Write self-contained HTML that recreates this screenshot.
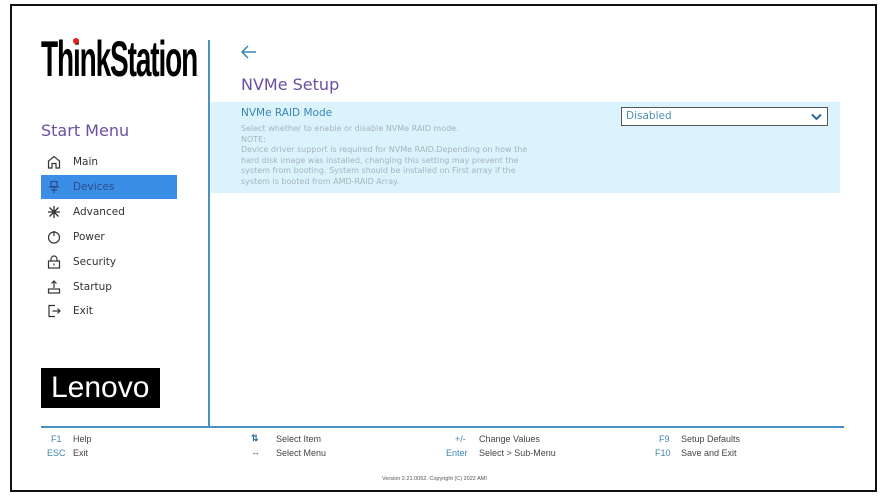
<!DOCTYPE html>
<html><head><meta charset="utf-8"><style>
*{margin:0;padding:0;box-sizing:border-box}
body{width:887px;height:496px;background:#fff;position:relative;overflow:hidden;font-family:"DejaVu Sans","Liberation Sans",sans-serif}
.abs{position:absolute}
.frame{left:10px;top:4px;width:867px;height:488px;border:2px solid #111}
.logo{left:41px;top:32px;font-family:"Liberation Sans",sans-serif;font-weight:bold;font-size:50px;letter-spacing:-2px;transform:scaleX(0.56);transform-origin:left top;color:#000;line-height:54px;white-space:nowrap}
.vline{left:208px;top:40px;width:2px;height:388px;background:#4a8fc2}
.hline{left:41px;top:426px;width:803px;height:2px;background:#4a8fc2}
.sm{left:41px;top:121px;font-size:16px;color:#6b4fa0}
.item{left:41px;width:136px;height:24px;font-size:10.5px;color:#333;line-height:24px;padding-left:32px}
.item svg{position:absolute;left:6px;top:5px}
.sel{background:#3a8ee6;color:#2a4d8a}
.lenovo{left:41px;top:368px;width:119px;height:40px;background:#000;color:#fff;font-family:"Liberation Sans",sans-serif;font-size:30px;line-height:40px;padding-left:10px;letter-spacing:0px}
.hl{left:211px;top:102px;width:629px;height:91px;background:#daf3fc}
.t1{left:241px;top:107px;font-size:10.5px;color:#3a86b0}
.desc{left:241px;top:124px;font-size:8px;line-height:10.5px;color:#a8b4ba}
.dd{left:621px;top:107px;width:207px;height:19px;border:1px solid #555;background:#fff;font-size:10.5px;color:#4a8fb5;padding-left:4px;line-height:17px}
.title{left:241px;top:75px;font-size:16px;color:#6b4fa0}
.f{font-size:9px;color:#444;font-family:"Liberation Sans Narrow","Liberation Sans",sans-serif}
.k{color:#3a86b0}
</style></head><body>
<div class="abs frame"></div>
<div class="abs logo">ThinkStation<span style="font-size:6px">.</span></div>
<div class="abs" style="left:73px;top:38px;width:6px;height:6px;border-radius:50%;background:#e2231a"></div>
<div class="abs vline"></div>
<div class="abs hline"></div>
<div class="abs sm">Start Menu</div>

<div class="abs item" style="top:150px"><svg width="14" height="14" viewBox="0 0 14 14" fill="none" stroke="#333" stroke-width="1.2"><path d="M1.5 13V6L7 1.5 12.5 6V13H9V8.5H5V13Z"/></svg>Main</div>
<div class="abs item sel" style="top:175px"><svg width="14" height="14" viewBox="0 0 14 14" fill="none" stroke="#2a4d8a" stroke-width="1.2"><rect x="4" y="1.5" width="6" height="5"/><path d="M2 7h10M7 7v6M4 10h6"/></svg>Devices</div>
<div class="abs item" style="top:200px"><svg width="14" height="14" viewBox="0 0 14 14" fill="none" stroke="#333" stroke-width="1.3"><path d="M7 1v12M1 7h12M2.5 2.5l9 9M11.5 2.5l-9 9"/></svg>Advanced</div>
<div class="abs item" style="top:225px"><svg width="14" height="14" viewBox="0 0 14 14" fill="none" stroke="#333" stroke-width="1.2"><circle cx="7" cy="7.5" r="5.5"/><path d="M7 1v5"/></svg>Power</div>
<div class="abs item" style="top:250px"><svg width="14" height="14" viewBox="0 0 14 14" fill="none" stroke="#333" stroke-width="1.2"><path d="M4 6V4a3 3 0 0 1 6 0v2"/><rect x="1.5" y="6" width="11" height="7"/><path d="M7 8.5v2"/></svg>Security</div>
<div class="abs item" style="top:275px"><svg width="14" height="14" viewBox="0 0 14 14" fill="none" stroke="#333" stroke-width="1.2"><path d="M7 1v7M4.5 3.5 7 1l2.5 2.5"/><rect x="1.5" y="9" width="11" height="4"/></svg>Startup</div>
<div class="abs item" style="top:299px"><svg width="14" height="14" viewBox="0 0 14 14" fill="none" stroke="#333" stroke-width="1.2"><path d="M8 1.5H2v11h6M5.5 7H13M10.5 4.5 13 7l-2.5 2.5"/></svg>Exit</div>

<div class="abs lenovo">Lenovo<span style="font-size:5px">.</span></div>

<svg class="abs" style="left:240px;top:44px" width="18" height="16" viewBox="0 0 18 16" fill="none" stroke="#3a86b0" stroke-width="1.5"><path d="M16 8H2M8 2 2 8l6 6"/></svg>
<div class="abs title">NVMe Setup</div>
<div class="abs hl"></div>
<div class="abs t1">NVMe RAID Mode</div>
<div class="abs desc">Select whether to enable or disable NVMe RAID mode.<br>NOTE:<br>Device driver support is required for NVMe RAID.Depending on how the<br>hard disk image was installed, changing this setting may prevent the<br>system from booting. System should be installed on First array if the<br>system is booted from AMD-RAID Array.</div>
<div class="abs dd">Disabled<svg style="position:absolute;right:5px;top:5px" width="11" height="8" viewBox="0 0 11 8" fill="none" stroke="#2a6a99" stroke-width="2"><path d="M1 1.5 5.5 6 10 1.5"/></svg></div>

<div class="abs f" style="left:51px;top:434px"><span class="k">F1</span></div>
<div class="abs f" style="left:73px;top:434px">Help</div>
<div class="abs f" style="left:47px;top:448px"><span class="k">ESC</span></div>
<div class="abs f" style="left:73px;top:448px">Exit</div>
<div class="abs f" style="left:251px;top:433px"><span class="k" style="color:#2a6a99;font-weight:bold">⇅</span></div>
<div class="abs f" style="left:276px;top:434px">Select Item</div>
<div class="abs f" style="left:251px;top:447px"><span class="k" style="color:#2a6a99;font-weight:bold">↔</span></div>
<div class="abs f" style="left:276px;top:448px">Select Menu</div>
<div class="abs f" style="left:455px;top:434px"><span class="k">+/-</span></div>
<div class="abs f" style="left:479px;top:434px">Change Values</div>
<div class="abs f" style="left:446px;top:448px"><span class="k">Enter</span></div>
<div class="abs f" style="left:479px;top:448px">Select &gt; Sub-Menu</div>
<div class="abs f" style="left:659px;top:434px"><span class="k">F9</span></div>
<div class="abs f" style="left:681px;top:434px">Setup Defaults</div>
<div class="abs f" style="left:655px;top:448px"><span class="k">F10</span></div>
<div class="abs f" style="left:681px;top:448px">Save and Exit</div>
<div class="abs f" style="left:382px;top:476px;font-size:5.5px;color:#555">Version 2.21.0052. Copyright (C) 2022 AMI</div>
</body></html>
